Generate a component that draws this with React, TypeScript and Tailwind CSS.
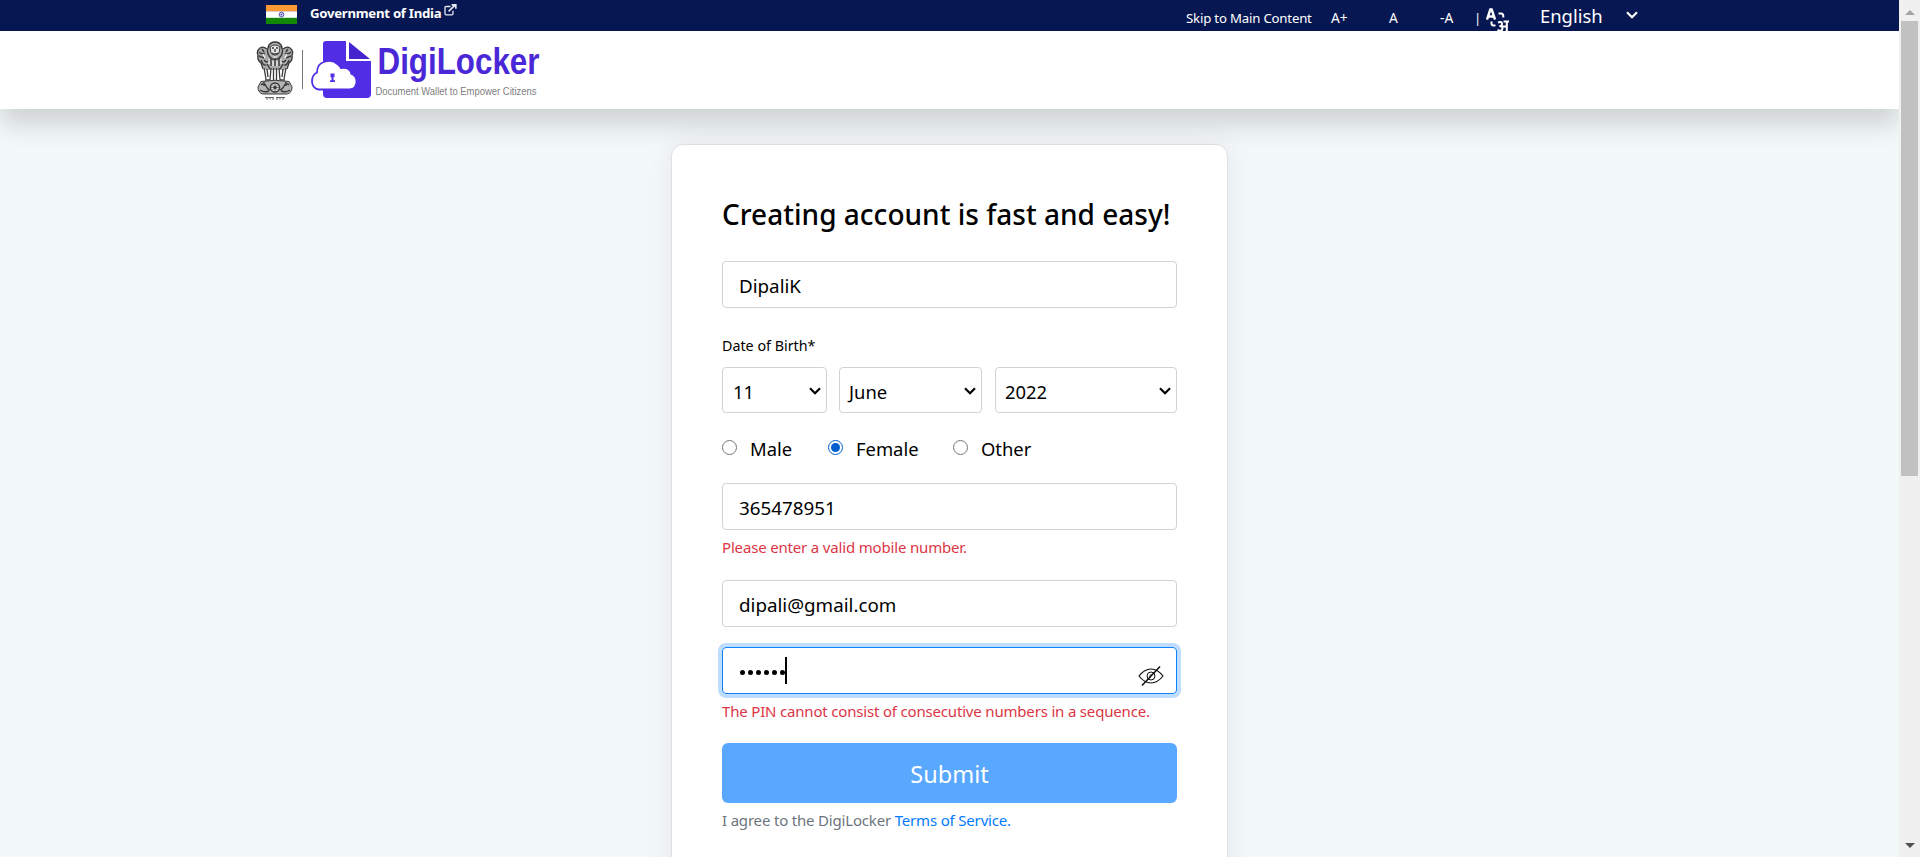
import React, { useState } from "react";

const field =
  "flex h-[47px] w-full items-center rounded border border-[#ced4da] bg-white px-4 pt-[3px] text-[18.8px] text-black";

function Chevron({ className = "" }: { className?: string }) {
  return (
    <svg viewBox="0 0 12 8" className={className} fill="none" stroke="currentColor">
      <path d="M1 1.2 L6 6.2 L11 1.2" strokeWidth="2.2" />
    </svg>
  );
}

function Flag() {
  return (
    <svg viewBox="0 0 31 19" className="h-[19px] w-[31px]">
      <rect width="31" height="6.5" fill="#ff9933" />
      <rect y="6.3" width="31" height="6.7" fill="#fff" />
      <rect y="12.8" width="31" height="6.2" fill="#138808" />
      <circle cx="15.5" cy="9.6" r="2.4" fill="#c9c9ee" stroke="#4a4aa8" strokeWidth="0.9" />
      <circle cx="15.5" cy="9.6" r="0.8" fill="#4a4aa8" />
    </svg>
  );
}

function ExternalIcon() {
  return (
    <svg viewBox="0 0 13 12" className="h-3 w-[13px]" fill="none" stroke="#e8eaf3">
      <path d="M6.5 2.5H2.2Q1 2.5 1 3.7V9.6Q1 10.8 2.2 10.8H7.8Q9 10.8 9 9.6V6.8" strokeWidth="1.3" />
      <path d="M4.6 7.4L11 1.2M7.6 0.8H11.8V4.8" strokeWidth="1.7" />
    </svg>
  );
}

function Emblem() {
  return (
    <svg viewBox="0 0 38 60" className="h-[60px] w-[38px]" fill="none" stroke="#3a3a3a" strokeWidth="1">
      <path fill="#aaa" stroke="none" d="M12 5Q14 1 19 1T26 5L27 8Q30 5 34 7Q38 10 36 14Q37 19 33 22L31 26L29 29H9L7 26L5 22Q1 19 2 14Q0 10 4 7Q8 5 11 8Z" />
      <path d="M12 6Q14 1 19 1T26 6M11 8Q7 5 4 7Q0 10 2 14Q1 19 5 22L7 28M27 8Q31 5 34 7Q38 10 36 14Q37 19 33 22L31 28" strokeWidth="1.3" />
      <path fill="#e4e4e4" d="M14 6Q19 2 24 6L23 12Q19 16 15 12Z" />
      <path d="M13 5Q10 10 13 15Q16 19 19 18Q22 19 25 15Q28 10 25 5M16 7h2M20 7h2M19 8v3M16 12q3 2 6 0" strokeWidth="1.4" />
      <path d="M3 11q3 3 6 1M35 11q-3 3-6 1M3 15l5 2M35 15l-5 2M6 8l2 3M32 8l-2 3M8 19q3 4 5 0M30 19q-3 4-5 0M5 19q2 6 5 5M33 19q-2 6-5 5" strokeWidth="1.4" />
      <path d="M15 17v8M19 19v6M23 17v8M11 23l3 5M27 23l-3 5" strokeWidth="1.4" />
      <path stroke="#f4f4f4" strokeWidth="1.2" d="M7 13l2 4M31 13l-2 4M17 16h4M13 18v5M25 18v5M17 20v5M21 20v5" />
      <path d="M8 27l2 11M11 28l1 8M15 27l-1 12M17.500 27v12M20.500 27v12M23 27l1 12M27 28l-1 8M30 27l-2 11M9 39h5M24 39h5" strokeWidth="1.3" />
      <path fill="#b4b4b4" d="M5 40.500Q19 38 33 40.500L36 46Q36 52 31 53H7Q2 52 2 46Z" />
      <circle cx="19" cy="46.5" r="4.6" fill="#ddd" strokeWidth="1.5" />
      <circle cx="19" cy="46.5" r="1.3" fill="#333" />
      <path d="M19 42v9M14.5 46.5h9M16 43.5l6 6M22 43.5l-6 6" strokeWidth="0.6" />
      <path d="M5 44q3-3 5 1t4 4M33 44q-3-3-5 1t-4 4M4 49q4 3 9 1M34 49q-4 3-9 1M8 41v4M30 41v4" strokeWidth="1.4" />
      <path d="M9 56.500h9M20 56.500h9M11 56.500v2.500M14 56.500v2M17 56.500v2.500M21 56.500v2.500M24 56.500v2M27 56.500v2.500" stroke="#555" strokeWidth="0.9" />
    </svg>
  );
}

function LockerMark() {
  return (
    <svg viewBox="0 0 60 57" className="h-[57px] w-[60px]">
      <path fill="#512ee5" d="M15 0H35V20H60V53Q60 57 56 57H16Q12 57 12 53V3Q12 0 15 0Z" />
      <path fill="#4523cf" d="M38 1L59 18H38Z" />
      <path
        fill="#fff"
        stroke="#512ee5"
        strokeWidth="1.8"
        d="M7.5 48.500Q1 47 1 40Q1 34 6 31.500Q6 23 13 21Q21 18 27 23.500Q29 25 30 27Q39 25.500 40.500 33Q45.500 35 45.500 40.500Q45.500 48 38.500 48.500H9Z"
      />
      <path fill="#512ee5" d="M19.500 32.500h4v3.800h-1v3h1.500v1.700h-5v-1.700h1.500v-3h-1z" />
    </svg>
  );
}

function TranslateIcon() {
  return (
    <svg viewBox="0 0 24 23" className="h-[23px] w-6" fill="none" stroke="#fff">
      <path d="M1 11.500L4.300 1.500H5.700L9 11.500M2.500 8.500H7.500" strokeWidth="2.400" />
      <path d="M12.500 5.500H15Q17.300 5.500 17.300 8V9.500M5.500 13.500V15.500Q5.500 17.500 7.500 17.500H9.500" strokeWidth="2" />
      <path d="M17.500 13.500H23M20.800 13.500V23M12 14.500Q16 13 16 15.800T13.500 18Q17 18 16.300 21T11.500 22M16.500 18.500h4" strokeWidth="2.100" />
    </svg>
  );
}

function EyeOff() {
  return (
    <svg viewBox="0 0 26 20" className="h-5 w-[26px]" fill="none" stroke="#111" strokeWidth="1.200">
      <path d="M1 10Q6.500 3 13 3T25 10Q19.500 17 13 17T1 10Z" />
      <circle cx="13" cy="10" r="4" strokeWidth="1" />
      <path d="M12 12V10Q12 8.500 13.500 8.500" strokeWidth="0.900" />
      <path d="M4 19.500L22 0.500" strokeWidth="1.500" />
    </svg>
  );
}

function TopBar() {
  return (
    <div className="flex h-[31px] items-start overflow-hidden bg-[#061752] text-white">
      <div className="flex pl-[266px] pt-[5px]">
        <Flag />
      </div>
      <span className="ml-[13px] w-[132px] whitespace-nowrap text-[13.200px] font-bold leading-[26px] tracking-[-0.270px]">
        Government of India
      </span>
      <div className="ml-[2px] pt-[4px]">
        <ExternalIcon />
      </div>
      <div className="ml-auto flex items-start whitespace-nowrap text-[13.200px] leading-[36px]">
        <span className="w-[145px] tracking-[-0.180px]">Skip to Main Content</span>
        <span className="w-[58px] text-[13.800px]">A+</span>
        <span className="w-[51px] text-[13.800px]">A</span>
        <span className="w-[34px] text-[13.800px]">-A</span>
        <span className="w-[12px]">|</span>
        <div className="pt-[8px]">
          <TranslateIcon />
        </div>
        <span className="ml-[30px] w-[86px] text-[18.400px] leading-[32px]">English</span>
        <Chevron className="mr-[261px] mt-[11px] h-[8px] w-[12px]" />
      </div>
    </div>
  );
}

function Header() {
  return (
    <header className="relative flex h-[78px] items-start bg-white pl-[256px] pt-[10px] shadow-[0_16px_24px_rgba(0,0,0,0.15)]">
      <Emblem />
      <div className="ml-[8px] mt-[9px] h-[39px] w-px bg-[#777]" />
      <div className="ml-[8px]">
        <LockerMark />
      </div>
      <svg viewBox="0 0 180 66" className="ml-[4px] h-[66px] w-[180px] overflow-visible" role="img">
        <text x="2.500" y="33" textLength="162" lengthAdjust="spacingAndGlyphs" fontFamily="Liberation Sans Narrow, Liberation Sans, sans-serif" fontWeight="700" fontSize="37" fill="#4a28d8">
          DigiLocker
        </text>
        <text x="0.500" y="54" textLength="161" lengthAdjust="spacingAndGlyphs" fontFamily="Liberation Sans Narrow, Liberation Sans, sans-serif" fontSize="11.500" fill="#808080">
          Document Wallet to Empower Citizens
        </text>
      </svg>
    </header>
  );
}

function SelectBox({ value, className }: { value: string; className: string }) {
  return (
    <button className={`flex h-[46px] items-center justify-between rounded border border-[#ced4da] pr-[5px] pt-[4px] text-[18.400px] ${className}`}>
      {value}
      <Chevron className="mb-[3px] h-[8px] w-[12px]" />
    </button>
  );
}

function Radio({ label, checked, onClick, className }: { label: string; checked: boolean; onClick: () => void; className: string }) {
  return (
    <button onClick={onClick} className={`flex items-center text-left ${className}`}>
      <span className={`mb-[2px] flex h-[15px] w-[15px] items-center justify-center rounded-full border ${checked ? "border-[#005fcc]" : "border-[#767676]"}`}>
        {checked && <span className="h-[9px] w-[9px] rounded-full bg-[#005fcc]" />}
      </span>
      <span className="ml-[13px]">{label}</span>
    </button>
  );
}

function Scrollbar() {
  return (
    <div className="flex h-[857px] w-[21px] flex-col items-center bg-[#f0f0f0]">
      <div className="flex h-[21px] items-center">
        <svg viewBox="0 0 10 5" className="mt-[3px] h-[5px] w-[10px]"><path d="M0 5L5 0L10 5Z" fill="#a3a3a3" /></svg>
      </div>
      <div className="h-[455px] w-[17px] bg-[#c1c1c1]" />
      <div className="mt-auto flex h-[19px] items-center">
        <svg viewBox="0 0 10 5" className="mb-[4px] h-[5px] w-[10px]"><path d="M0 0L5 5L10 0Z" fill="#505050" /></svg>
      </div>
    </div>
  );
}

export default function App() {
  const [gender, setGender] = useState("Female");
  return (
    <div className="flex h-[857px] w-[1920px] overflow-hidden font-['Noto_Sans','Open_Sans',sans-serif]">
      <div className="h-[857px] w-[1899px] overflow-hidden bg-[#f3f8f9]">
        <TopBar />
        <Header />
        <main className="flex justify-center pt-[35px]">
          <div className="h-[860px] w-[557px] rounded-xl border border-[#dfe0e3] bg-white px-[50px] pt-[44px] text-black shadow-[0_0_30px_rgba(60,10,50,0.07)]">
            <h1 className="h-[72px] whitespace-nowrap text-[28px] font-medium leading-[51px] tracking-[0.020px]">Creating account is fast and easy!</h1>
            <div className={field}>DipaliK</div>
            <div className="h-[59px] pt-[24px] text-[14.300px] leading-[28px]">Date of Birth*</div>
            <div className="flex">
              <SelectBox value="11" className="w-[105px] pl-[10px]" />
              <SelectBox value="June" className="ml-[12px] w-[143px] pl-[9px]" />
              <SelectBox value="2022" className="ml-auto w-[182px] pl-[9px]" />
            </div>
            <div className="flex h-[70px] items-center pt-[1px] text-[18.400px]">
              <Radio label="Male" checked={gender === "Male"} onClick={() => setGender("Male")} className="w-[106px]" />
              <Radio label="Female" checked={gender === "Female"} onClick={() => setGender("Female")} className="w-[125px]" />
              <Radio label="Other" checked={gender === "Other"} onClick={() => setGender("Other")} className="w-[100px]" />
            </div>
            <div className={field}>365478951</div>
            <p className="h-[50px] pt-[3px] text-[15px] leading-[28px] tracking-[-0.170px] text-[#dc3545]">Please enter a valid mobile number.</p>
            <div className={field}>dipali@gmail.com</div>
            <div className="mt-5 flex h-[47px] items-center rounded border border-[#0f80ff] pl-[17px] pr-[12px] shadow-[0_0_0_4px_#bfdeff]">
              <div className="flex gap-[3px]">
                {[0, 1, 2, 3, 4, 5].map((i) => (
                  <span key={i} className="mt-[3px] h-[5px] w-[5px] rounded-full bg-black" />
                ))}
              </div>
              <div className="h-[27px] w-[2px] bg-black" />
              <div className="ml-auto mt-[11px]">
                <EyeOff />
              </div>
            </div>
            <p className="h-[49px] whitespace-nowrap pt-[3px] text-[15px] leading-[28px] tracking-[-0.180px] text-[#dc3545]">The PIN cannot consist of consecutive numbers in a sequence.</p>
            <button className="flex h-[60px] w-full items-center justify-center rounded-md bg-[#59a8ff] pt-[3px] text-[23.500px] text-white">Submit</button>
            <p className="pt-[3px] text-[15px] leading-[28px] tracking-[-0.180px] text-[#6c757d]">
              I agree to the DigiLocker <a className="text-[#007bff]">Terms of Service.</a>
            </p>
          </div>
        </main>
      </div>
      <Scrollbar />
    </div>
  );
}
